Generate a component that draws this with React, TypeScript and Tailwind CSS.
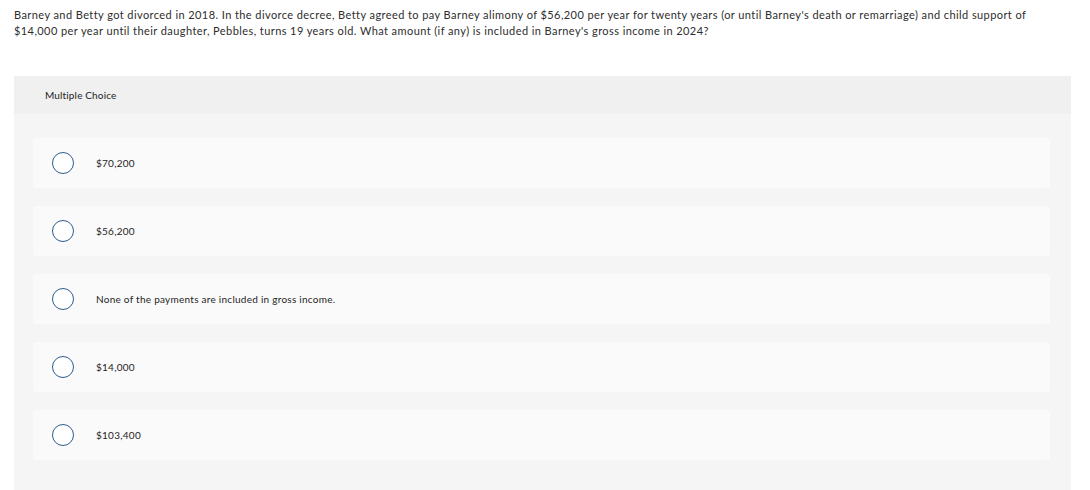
import React from "react";

const options = [
  "$70,200",
  "$56,200",
  "None of the payments are included in gross income.",
  "$14,000",
  "$103,400",
];

export default function App() {
  return (
    <div className="w-[1090px] h-[490px] overflow-hidden bg-white" style={{ fontFamily: "Lato, 'Liberation Sans', sans-serif" }}>
      <p className="pl-[14px] pr-[52px] pt-[7px] text-[11px] leading-[16px] tracking-[0.42px] text-[#2d2d2d]">
        Barney and Betty got divorced in 2018. In the divorce decree, Betty agreed to pay Barney alimony of $56,200 per year for twenty years (or until Barney's death or remarriage) and child support of $14,000 per year until their daughter, Pebbles, turns 19 years old. What amount (if any) is included in Barney's gross income in 2024?
      </p>
      <div className="ml-[14px] mt-[37px] w-[1057px] bg-[#f5f5f5] h-[420px]">
        <div className="h-[38px] bg-[#f0f0f0] flex items-center pl-[31px] text-[10px] tracking-[0.15px] text-[#222]">
          Multiple Choice
        </div>
        <div className="flex flex-col gap-[18px] pt-[24px] pl-[19px] pr-[21px]">
          {options.map((o) => (
            <div key={o} className="h-[50px] bg-[#fafafa] rounded-[3px] flex items-center pl-[19px]">
              <div className="w-[22px] h-[22px] rounded-full border-[1.5px] border-[#2c5d8f] bg-white shrink-0" />
              <span className="ml-[22px] text-[10px] tracking-[0.26px] text-[#1e1e1e]">{o}</span>
            </div>
          ))}
        </div>
      </div>
    </div>
  );
}
